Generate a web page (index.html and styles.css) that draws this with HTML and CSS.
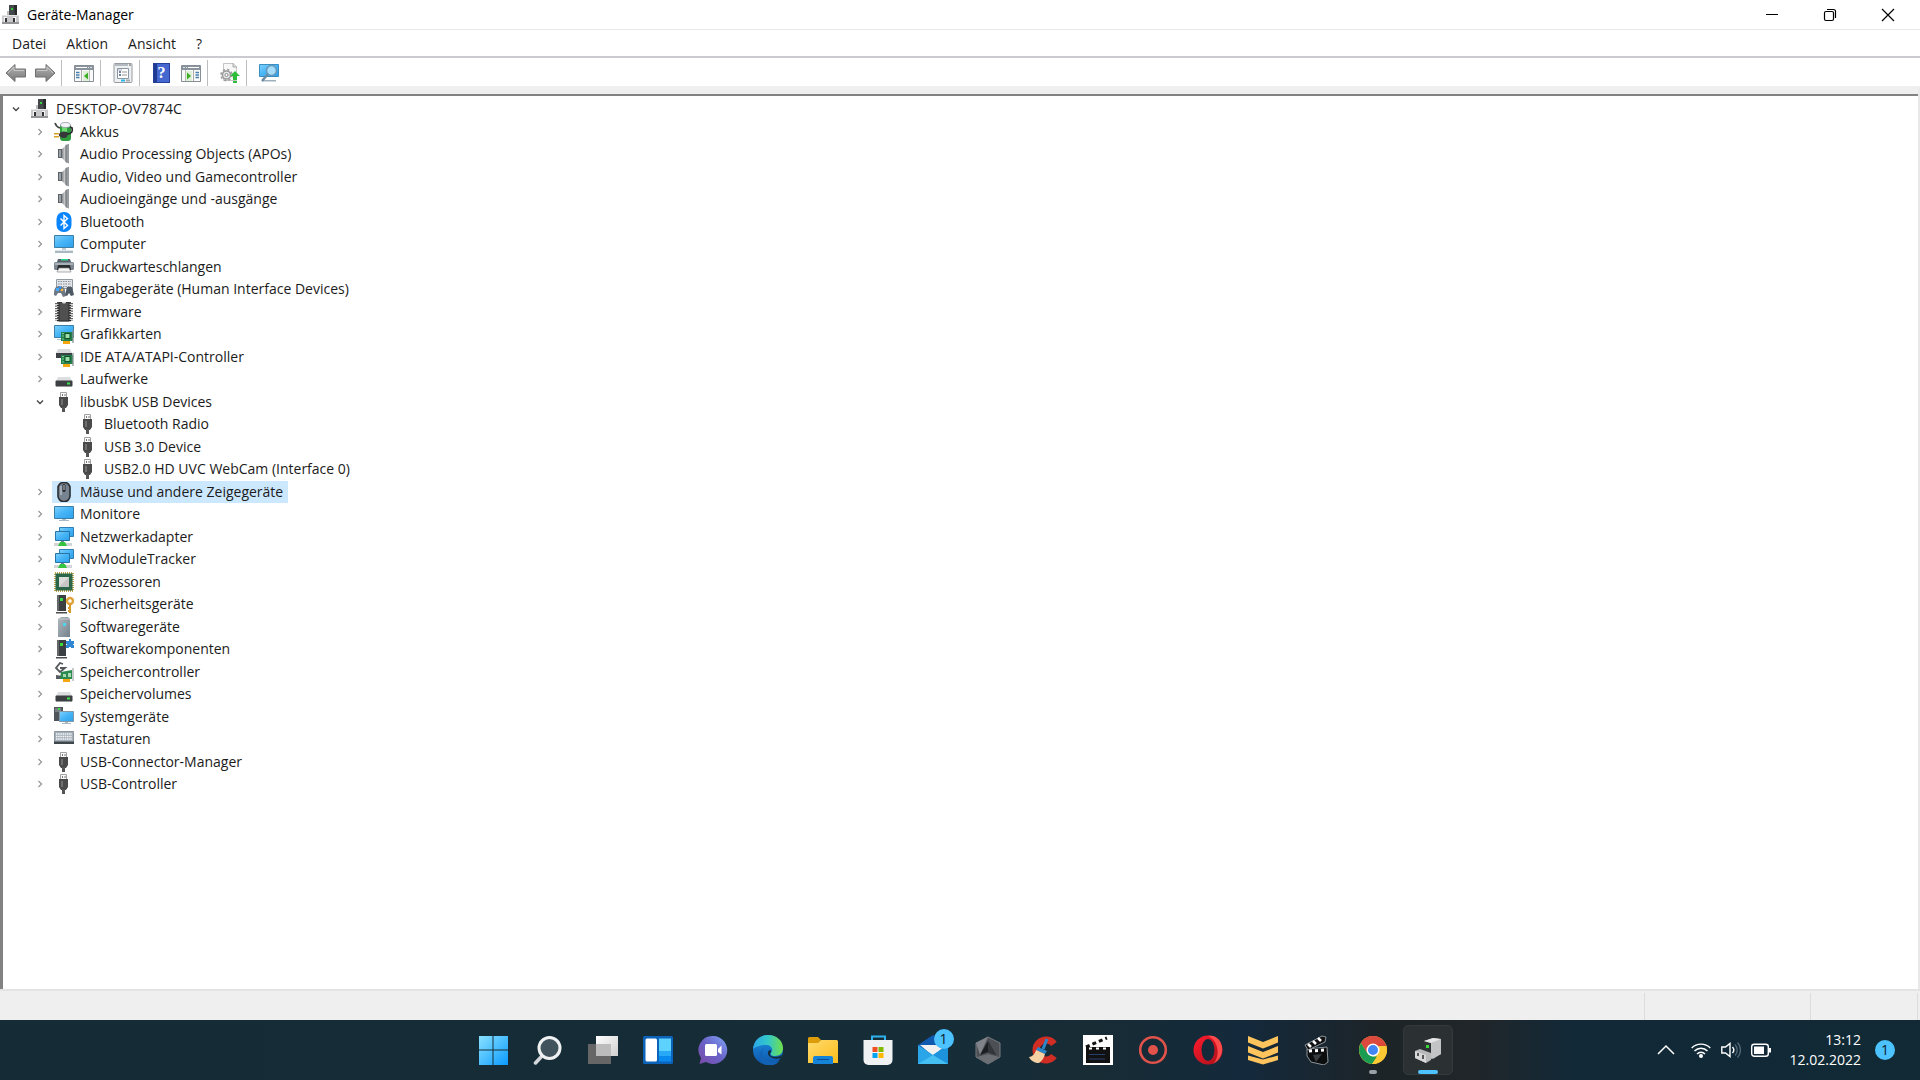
FILE: index.html
```html
<!DOCTYPE html>
<html lang="de">
<head>
<meta charset="utf-8">
<meta name="viewport" content="width=device-width, initial-scale=1">
<title>Geräte-Manager</title>
<link rel="stylesheet" href="styles.css">
</head>
<body>
<svg class="sprite" aria-hidden="true">
  <defs>
    <linearGradient id="g-screen" x1="0" y1="0" x2="1" y2="1"><stop offset="0" stop-color="#7fd0fb"/><stop offset=".5" stop-color="#45b4f7"/><stop offset="1" stop-color="#2f9fe8"/></linearGradient>
    <linearGradient id="g-metal" x1="0" y1="0" x2="1" y2="0"><stop offset="0" stop-color="#85898d"/><stop offset=".5" stop-color="#c4c6c8"/><stop offset="1" stop-color="#75797d"/></linearGradient>
    <linearGradient id="g-arrow" x1="0" y1="0" x2="0" y2="1"><stop offset="0" stop-color="#b5b5b5"/><stop offset="1" stop-color="#777"/></linearGradient>
    <linearGradient id="g-tower" x1="0" y1="0" x2="1" y2="1"><stop offset="0" stop-color="#b0b8be"/><stop offset="1" stop-color="#75828c"/></linearGradient>
    <linearGradient id="g-win" x1="0" y1="0" x2="1" y2="1"><stop offset="0" stop-color="#8ae1ff"/><stop offset="1" stop-color="#0a9bff"/></linearGradient>
    <linearGradient id="g-white" x1="0" y1="0" x2="1" y2="1"><stop offset="0" stop-color="#fff"/><stop offset="1" stop-color="#cfcfcf"/></linearGradient>
    <linearGradient id="g-chat" x1="1" y1="0" x2="0" y2="1"><stop offset="0" stop-color="#7fa5f5"/><stop offset=".5" stop-color="#6a62c8"/><stop offset="1" stop-color="#7a4aa8"/></linearGradient>
    <linearGradient id="g-edge1" x1="0" y1="0" x2="1" y2="0"><stop offset="0" stop-color="#2aa7ea"/><stop offset=".5" stop-color="#34c8c9"/><stop offset="1" stop-color="#6fe04a"/></linearGradient>
    <linearGradient id="g-edge2" x1="0" y1="0" x2="0" y2="1"><stop offset="0" stop-color="#1b8fdf"/><stop offset="1" stop-color="#0f57ad"/></linearGradient>
    <linearGradient id="g-folder" x1="0" y1="0" x2="1" y2="1"><stop offset="0" stop-color="#ffdb6e"/><stop offset="1" stop-color="#fdbc1a"/></linearGradient>
    <linearGradient id="g-opera" x1="0" y1="0" x2="1" y2="1"><stop offset="0" stop-color="#ff1b2d"/><stop offset="1" stop-color="#a8101a"/></linearGradient>

    <symbol id="i-devmgr" viewBox="0 0 20 20"><path d="M8 0h7v11H8z" fill="#45484b"/><path d="M13 0h3v11h-2z" fill="#27292b"/><path d="M10 3h2v2h-2z" fill="#2fd23c"/><path d="M6 6h2v5H6z" fill="#bcbec0"/><path d="M1 10h17v8H1z" fill="#c9c9cb"/><path d="M1 10h17v1H1z" fill="#e6e6e6"/><path d="M1 17h17v2H1z" fill="#929496"/><path d="M3 12h3v5H3zM12 12h3v5h-3z" fill="#f5f5f5"/><path d="M4 13h2v4H4zM12 13h2v4h-2z" fill="#333"/></symbol>
    <symbol id="i-battery" viewBox="0 0 20 20"><rect x="6" y="2" width="11" height="17" rx="3" fill="#2f9c3e"/><path d="M8 5h5v5H8z" fill="#6fdc74"/><ellipse cx="11.500" cy="3" rx="5" ry="2.500" fill="#f3f3f8" stroke="#8c8fa5" stroke-width=".8"/><path d="M1 1c1 3 2 4 5 5" stroke="#444" stroke-width="1.600" fill="none"/><path d="M5 12c2-3 5-3 8-2l1 2-1 3c-3 2-5 1-8-1z" fill="#36383a"/><path d="M13 12c5 0 6-3 5-6l-2-1" fill="none" stroke="#2c2e30" stroke-width="1.800"/><path d="M0 11h5v1.500H0zM0 14h5v1.500H0z" fill="#d6a326"/></symbol>
    <symbol id="i-speaker" viewBox="0 0 20 20"><path d="M4 5h4v9H4z" fill="#5c6166"/><path d="M5 6h2v7H5z" fill="#9aa1a7"/><path d="M8 5l5-4.500v18.500l-5-5z" fill="url(#g-metal)"/><path d="M11.500 1L15 0v19.500L11.500 18z" fill="#83878b"/><path d="M14 1v18" stroke="#aeb2b5"/></symbol>
    <symbol id="i-bluetooth" viewBox="0 0 20 20"><rect x="2.500" width="15" height="20" rx="7" fill="#0a84ff"/><path d="M6.500 6.500l7 7-3.500 3v-13l3.500 3-7 7" fill="none" stroke="#fff" stroke-width="1.400"/></symbol>
    <symbol id="i-computer" viewBox="0 0 20 20"><path d="M.5 1.500h19v12H.5z" fill="url(#g-screen)" stroke="#3b7fa8"/><path d="M8 14h4v2H8z" fill="#c5cdd3"/><path d="M1 17h18v2H1z" fill="#a9b9c2"/><path d="M1 16h18v1H1z" fill="#dfe6ea"/></symbol>
    <symbol id="i-printer" viewBox="0 0 20 20"><path d="M4 2h12l1 3H3z" fill="#57606a"/><path d="M7 2h7v1.500H7z" fill="#2fd38c"/><rect y="5" width="20" height="8" rx="1.500" fill="#7b858f"/><path d="M1 6h18v2H1z" fill="#a9b1b8"/><path d="M4 8h12l1 5H3z" fill="#2a2d30"/><path d="M5 11h10l2 4H3z" fill="#f4f4f4" stroke="#777" stroke-width=".6"/></symbol>
    <symbol id="i-hid" viewBox="0 0 20 20"><path d="M2.500.5h16v9h-16z" fill="#e2e5e9" stroke="#9199a1"/><path d="M4 2.500h13M4 5h13M4 7.500h13" stroke="#858d95" stroke-dasharray="1.500 1"/><path d="M2 8c2-1 3-1 4 0h2c2 0 3 2 3 4l1 5-3 1-2-4H4l-2 3-2-1c0-3 0-6 2-8z" fill="#6c7885"/><path d="M13 8h2c3-1 4 1 4 4l1 4-3 1-2-3-2 3-2-1z" fill="#4d5965"/><path d="M2 9h3v3H2z" fill="#44a9ff"/><circle cx="6" cy="8.500" r="1.300" fill="#2b8ef5"/><circle cx="8" cy="11" r="1.300" fill="#f5b83a"/></symbol>
    <symbol id="i-firmware" viewBox="0 0 20 20"><path d="M3 1h14M3 3.500h14M3 6h14M3 8.500h14M3 11h14M3 13.500h14M3 16h14M3 18.500h14" stroke="#1c1c1c" stroke-width="1.300"/><path d="M2 1v18M18 1v18" stroke="#333" stroke-width="1.500" stroke-dasharray="1.300 1.200"/><path d="M5 0h10v19H5z" fill="#505050" stroke="#2b2b2b"/><path d="M8 0h4c0 2-4 2-4 0z" fill="#ddd"/></symbol>
    <symbol id="i-board" viewBox="0 0 20 20"><path d="M9 17h7v3H9z" fill="#f5a50f"/><path d="M7 8h12v9H7z" fill="#25814b"/><path d="M19 6v13" stroke="#8d9598" stroke-width="1.300"/><path d="M11 9.500h5v5h-5z" fill="#9be0a9" stroke="#124d2b"/><path d="M8 9.500h2M8 12h2M8 15h2" stroke="#7dcc91"/></symbol>
    <symbol id="i-gpu" viewBox="0 0 20 20"><path d="M.5 1.500h19v12H.5z" fill="url(#g-screen)" stroke="#3b7fa8"/><path d="M3 15h6v1H3z" fill="#afc3cf"/><use href="#i-board"/></symbol>
    <symbol id="i-ide" viewBox="0 0 20 20"><path d="M4 2h12l2 4H2z" fill="#d7d9da"/><path d="M2 6h16v5H2z" fill="#3d4145"/><use href="#i-board"/></symbol>
    <symbol id="i-drive" viewBox="0 0 20 20"><path d="M4 8h12l2 4H2z" fill="#dcdedf"/><rect x="1.500" y="11.500" width="17" height="6" rx="1" fill="#3c4043"/><path d="M2 17.500h16" stroke="#95999c"/><path d="M13 13.500h3v2h-3z" fill="#3ae04c"/></symbol>
    <symbol id="i-usb" viewBox="0 0 20 20"><path d="M6.500.5h6v6h-6z" fill="#fafafa" stroke="#a2a2a2"/><path d="M8 2h1v2H8zM10.500 2h1v2h-1z" fill="#777"/><path d="M5 5h9v8l-2 3H7l-2-3z" fill="#4a4a4a"/><path d="M7 7h2v6H7z" fill="#707070"/><path d="M8 15h3v5H8z" fill="#555"/></symbol>
    <symbol id="i-mouse" viewBox="0 0 20 20"><rect x="4" y=".5" width="12" height="19" rx="5.500" fill="#778390" stroke="#292d31" stroke-width="1.600"/><path d="M7 4v9" stroke="#b1bac3" stroke-width="1.500"/><rect x="8.500" y="2" width="3" height="8" rx="1.500" fill="#24282c"/><path d="M10 3v5" stroke="#c8ced4"/></symbol>
    <symbol id="i-monitor" viewBox="0 0 20 20"><path d="M.5 2.500h19v12H.5z" fill="url(#g-screen)" stroke="#3b7fa8"/><path d="M8 15h4v1H8zM5 16h10v1H5z" fill="#a9bac6"/></symbol>
    <symbol id="i-network" viewBox="0 0 20 20"><path d="M5.500.5h14v9h-14z" fill="url(#g-screen)" stroke="#2f7fb5"/><path d="M1.500 4.500h14v9h-14z" fill="url(#g-screen)" stroke="#2673a6"/><path d="M7 14h3v1H7z" fill="#6e8798"/><path d="M0 16h18v3H0z" fill="#d2d5d7"/><path d="M6 15h5l2 4H4z" fill="#35c43f"/></symbol>
    <symbol id="i-cpu" viewBox="0 0 20 20"><path d="M1 1h18v18H1z" fill="none" stroke="#c0a447" stroke-width="2" stroke-dasharray="1 1"/><path d="M1.500 1.500h17v17h-17z" fill="#2b6648"/><path d="M5 5h10v10H5z" fill="#dcdcdc"/><path d="M5 15L15 5v10z" fill="#c6c6c6"/></symbol>
    <symbol id="i-tower" viewBox="0 0 20 20"><path d="M3 1h9v16H3z" fill="#3c3f41"/><path d="M3 1h2v16H3z" fill="#66696b"/><path d="M6 4h3v3H6z" fill="#39dc42"/><path d="M2 18h11v1.500H2z" fill="#4a4c4e"/></symbol>
    <symbol id="i-security" viewBox="0 0 20 20"><use href="#i-tower"/><circle cx="16" cy="7" r="3" fill="none" stroke="#dfa33a" stroke-width="2.400"/><path d="M16 10v9M14 14h2M14 17h2" stroke="#d99a2c" stroke-width="2"/></symbol>
    <symbol id="i-softdev" viewBox="0 0 20 20"><path d="M4 2l3-2h7l2 2v18H4z" fill="url(#g-tower)"/><path d="M4 2h12" stroke="#c6ccd0"/><path d="M9 6h3v3H9z" fill="#4cd6ee"/></symbol>
    <symbol id="i-softcomp" viewBox="0 0 20 20"><use href="#i-tower"/><path d="M12 2h3V0h2v2h3v3h-1v1h1v3h-3V8h-2v1h-3V6h1V5h-1z" fill="#2d87d3"/></symbol>
    <symbol id="i-memctl" viewBox="0 0 20 20"><path d="M9 2L6 1 2 6l4 4 5-4H6" fill="none" stroke="#55595b" stroke-width="1.800"/><path d="M2 13l7 1v3H2z" fill="#585c5f"/><path d="M9 17h7v3H9z" fill="#f5a50f"/><path d="M7 10l11-2v9H6z" fill="#2d8a50"/><path d="M9 12h3v3H9zM14 11h3v4h-3z" fill="#a7dcb2"/><path d="M19 6v13" stroke="#8d9598"/></symbol>
    <symbol id="i-system" viewBox="0 0 20 20"><path d="M0 0h9v14H0z" fill="#50565a"/><path d="M1 2h6M1 4h6" stroke="#a0a5a8"/><path d="M4 1h2v2H4z" fill="#38e048"/><path d="M5.500 4.500h14v10h-14z" fill="url(#g-screen)" stroke="#8298a7"/><path d="M11 15h3v1h-3zM8 16h9v1H8z" fill="#a9bac6"/></symbol>
    <symbol id="i-keyboard" viewBox="0 0 20 20"><path d="M.5 2.500h19v11H.5z" fill="#a5afb8" stroke="#8c969e"/><path d="M2 5h16M2 7.500h16M2 10h16" stroke="#f6f8fa" stroke-width="1.500" stroke-dasharray="1.500 .7"/><path d="M0 12.500h20V15H0z" fill="#3f464c"/></symbol>
    <symbol id="i-open" viewBox="0 0 16 16"><path d="M5 6.500l3 3 3-3" fill="none" stroke="#444" stroke-width="1.300"/></symbol>
    <symbol id="i-closed" viewBox="0 0 16 16"><path d="M6.500 5l3 3-3 3" fill="none" stroke="#999" stroke-width="1.300"/></symbol>
    <symbol id="i-arrow" viewBox="0 0 22 20"><path d="M1 10l9-8.500V6h10.500v8H10v4.500z" fill="url(#g-arrow)" stroke="#707070"/><path d="M3 10l6-6v3.500h10" fill="none" stroke="#c6c6c6"/></symbol>
    <symbol id="i-panel" viewBox="0 0 20 20"><path d="M.5 2.500h19v16H.5z" fill="#fafafa" stroke="#868e96"/><path d="M1 3h18v4H1z" fill="#8b949d"/><path d="M2 4.500h11" stroke="#fff"/><path d="M14 4.500h1M16 4.500h2" stroke="#d9e1e8"/><path d="M7.500 7v11" stroke="#aaa"/><path d="M2 9.500h3.500M2 12h3.500M2 14.500h3.500" stroke="#477fae" stroke-width="1.300"/><path d="M9 8h6v10H9z" fill="#dff0d9"/><path d="M15.500 7v11" stroke="#bbb"/><path d="M14 9.500v7l-4-3.500z" fill="#3cac24"/></symbol>
  </defs>
</svg>

<div class="desktop">
<main class="window">
  <header class="titlebar">
    <svg class="icon"><use href="#i-devmgr"/></svg>
    <h1>Geräte-Manager</h1>
    <div class="window-buttons">
      <button aria-label="Minimieren"><svg viewBox="0 0 14 14"><path d="M1 6.500h12" stroke="#000" fill="none"/></svg></button>
      <button aria-label="Verkleinern"><svg viewBox="0 0 14 14"><rect x="1.500" y="3.500" width="9" height="9" rx="1.500" fill="none" stroke="#000" stroke-width="1.200"/><path d="M4 1.500h6.500a2 2 0 0 1 2 2V10" fill="none" stroke="#000" stroke-width="1.200"/></svg></button>
      <button aria-label="Schließen"><svg viewBox="0 0 14 14"><path d="M1 1l12 12M13 1L1 13" stroke="#000" stroke-width="1.200"/></svg></button>
    </div>
  </header>
  <nav class="menubar">
    <button>Datei</button><button>Aktion</button><button>Ansicht</button><button>?</button>
  </nav>
  <div class="toolbar" role="toolbar">
    <button aria-label="Zurück"><svg class="arrow"><use href="#i-arrow"/></svg></button>
    <button aria-label="Vorwärts"><svg class="arrow flip"><use href="#i-arrow"/></svg></button>
    <span class="sep"></span>
    <button aria-label="Konsolenstruktur"><svg class="icon"><use href="#i-panel"/></svg></button>
    <span class="sep"></span>
    <button aria-label="Eigenschaften"><svg class="icon" viewBox="0 0 20 20"><rect x="1" y=".5" width="18" height="19" rx="1" fill="#eef0f1" stroke="#969ca2"/><path d="M2 2h13" stroke="#b3bac0" stroke-width="2"/><path d="M16 2h2" stroke="#555"/><path d="M4.500 5.500h11v10h-11z" fill="#fff" stroke="#8a98a6"/><path d="M5 7h4" stroke="#aab" /><path d="M6 9h2M6 12h2" stroke="#458" stroke-width="1.500"/><path d="M9 9h5M9 12h5" stroke="#999"/><path d="M8 17.500h4" stroke="#28b5e8" stroke-width="2"/><path d="M13 17.500h4" stroke="#aaa" stroke-width="2"/></svg></button>
    <span class="sep"></span>
    <button aria-label="Hilfe"><span class="help">?</span></button>
    <button aria-label="Aktionsbereich"><svg class="icon flip"><use href="#i-panel"/></svg></button>
    <span class="sep"></span>
    <button aria-label="Treiber aktualisieren"><svg class="icon" viewBox="0 0 20 20"><path d="M3.500.5h10l3 3v14h-13z" fill="#f8f8f8" stroke="#c5c5c5"/><path d="M13 0v4h4" fill="#ddd" stroke="#aaa"/><circle cx="6.500" cy="12" r="4" fill="#eee" stroke="#9b9b9b" stroke-width="1.600"/><circle cx="6.500" cy="12" r="5.500" fill="none" stroke="#9b9b9b" stroke-width="1.600" stroke-dasharray="2.200 2.120"/><circle cx="6.500" cy="12" r="1.600" fill="#fff" stroke="#888"/><path d="M15 8l5 5h-3v4h-4v-4h-3z" fill="#2ebd3a"/><path d="M13 18h4v2h-4z" fill="#2ebd3a"/></svg></button>
    <span class="sep"></span>
    <button aria-label="Nach geänderter Hardware suchen"><svg class="icon" viewBox="0 0 20 20"><path d="M.5 1.500h19v12H.5z" fill="url(#g-screen)" stroke="#3b8fc0"/><path d="M3 17h14v1.500H3z" fill="#9db1bd"/><path d="M9 11l-6 7" stroke="#6b8ba3" stroke-width="2.500"/><circle cx="12.500" cy="7.500" r="5" fill="#a5dcf9" stroke="#6697b8" stroke-width="1.500"/></svg></button>
  </div>
  <section class="workspace">
    <ul class="tree" role="tree" aria-label="Geräte">
      <li class="l0"><button class="toggle" aria-label="Reduzieren"><svg><use href="#i-open"/></svg></button><span class="node"><svg class="icon"><use href="#i-devmgr"/></svg>DESKTOP-OV7874C</span></li>
      <li><button class="toggle" aria-label="Erweitern"><svg><use href="#i-closed"/></svg></button><span class="node"><svg class="icon"><use href="#i-battery"/></svg>Akkus</span></li>
      <li><button class="toggle" aria-label="Erweitern"><svg><use href="#i-closed"/></svg></button><span class="node"><svg class="icon"><use href="#i-speaker"/></svg>Audio Processing Objects (APOs)</span></li>
      <li><button class="toggle" aria-label="Erweitern"><svg><use href="#i-closed"/></svg></button><span class="node"><svg class="icon"><use href="#i-speaker"/></svg>Audio, Video und Gamecontroller</span></li>
      <li><button class="toggle" aria-label="Erweitern"><svg><use href="#i-closed"/></svg></button><span class="node"><svg class="icon"><use href="#i-speaker"/></svg>Audioeingänge und -ausgänge</span></li>
      <li><button class="toggle" aria-label="Erweitern"><svg><use href="#i-closed"/></svg></button><span class="node"><svg class="icon"><use href="#i-bluetooth"/></svg>Bluetooth</span></li>
      <li><button class="toggle" aria-label="Erweitern"><svg><use href="#i-closed"/></svg></button><span class="node"><svg class="icon"><use href="#i-computer"/></svg>Computer</span></li>
      <li><button class="toggle" aria-label="Erweitern"><svg><use href="#i-closed"/></svg></button><span class="node"><svg class="icon"><use href="#i-printer"/></svg>Druckwarteschlangen</span></li>
      <li><button class="toggle" aria-label="Erweitern"><svg><use href="#i-closed"/></svg></button><span class="node"><svg class="icon"><use href="#i-hid"/></svg>Eingabegeräte (Human Interface Devices)</span></li>
      <li><button class="toggle" aria-label="Erweitern"><svg><use href="#i-closed"/></svg></button><span class="node"><svg class="icon"><use href="#i-firmware"/></svg>Firmware</span></li>
      <li><button class="toggle" aria-label="Erweitern"><svg><use href="#i-closed"/></svg></button><span class="node"><svg class="icon"><use href="#i-gpu"/></svg>Grafikkarten</span></li>
      <li><button class="toggle" aria-label="Erweitern"><svg><use href="#i-closed"/></svg></button><span class="node"><svg class="icon"><use href="#i-ide"/></svg>IDE ATA/ATAPI-Controller</span></li>
      <li><button class="toggle" aria-label="Erweitern"><svg><use href="#i-closed"/></svg></button><span class="node"><svg class="icon"><use href="#i-drive"/></svg>Laufwerke</span></li>
      <li><button class="toggle" aria-label="Reduzieren"><svg><use href="#i-open"/></svg></button><span class="node"><svg class="icon"><use href="#i-usb"/></svg>libusbK USB Devices</span></li>
      <li class="l2"><span class="node"><svg class="icon"><use href="#i-usb"/></svg>Bluetooth Radio</span></li>
      <li class="l2"><span class="node"><svg class="icon"><use href="#i-usb"/></svg>USB 3.0 Device</span></li>
      <li class="l2"><span class="node"><svg class="icon"><use href="#i-usb"/></svg>USB2.0 HD UVC WebCam (Interface 0)</span></li>
      <li><button class="toggle" aria-label="Erweitern"><svg><use href="#i-closed"/></svg></button><span class="node selected"><svg class="icon"><use href="#i-mouse"/></svg>Mäuse und andere Zeigegeräte</span></li>
      <li><button class="toggle" aria-label="Erweitern"><svg><use href="#i-closed"/></svg></button><span class="node"><svg class="icon"><use href="#i-monitor"/></svg>Monitore</span></li>
      <li><button class="toggle" aria-label="Erweitern"><svg><use href="#i-closed"/></svg></button><span class="node"><svg class="icon"><use href="#i-network"/></svg>Netzwerkadapter</span></li>
      <li><button class="toggle" aria-label="Erweitern"><svg><use href="#i-closed"/></svg></button><span class="node"><svg class="icon"><use href="#i-network"/></svg>NvModuleTracker</span></li>
      <li><button class="toggle" aria-label="Erweitern"><svg><use href="#i-closed"/></svg></button><span class="node"><svg class="icon"><use href="#i-cpu"/></svg>Prozessoren</span></li>
      <li><button class="toggle" aria-label="Erweitern"><svg><use href="#i-closed"/></svg></button><span class="node"><svg class="icon"><use href="#i-security"/></svg>Sicherheitsgeräte</span></li>
      <li><button class="toggle" aria-label="Erweitern"><svg><use href="#i-closed"/></svg></button><span class="node"><svg class="icon"><use href="#i-softdev"/></svg>Softwaregeräte</span></li>
      <li><button class="toggle" aria-label="Erweitern"><svg><use href="#i-closed"/></svg></button><span class="node"><svg class="icon"><use href="#i-softcomp"/></svg>Softwarekomponenten</span></li>
      <li><button class="toggle" aria-label="Erweitern"><svg><use href="#i-closed"/></svg></button><span class="node"><svg class="icon"><use href="#i-memctl"/></svg>Speichercontroller</span></li>
      <li><button class="toggle" aria-label="Erweitern"><svg><use href="#i-closed"/></svg></button><span class="node"><svg class="icon"><use href="#i-drive"/></svg>Speichervolumes</span></li>
      <li><button class="toggle" aria-label="Erweitern"><svg><use href="#i-closed"/></svg></button><span class="node"><svg class="icon"><use href="#i-system"/></svg>Systemgeräte</span></li>
      <li><button class="toggle" aria-label="Erweitern"><svg><use href="#i-closed"/></svg></button><span class="node"><svg class="icon"><use href="#i-keyboard"/></svg>Tastaturen</span></li>
      <li><button class="toggle" aria-label="Erweitern"><svg><use href="#i-closed"/></svg></button><span class="node"><svg class="icon"><use href="#i-usb"/></svg>USB-Connector-Manager</span></li>
      <li><button class="toggle" aria-label="Erweitern"><svg><use href="#i-closed"/></svg></button><span class="node"><svg class="icon"><use href="#i-usb"/></svg>USB-Controller</span></li>
    </ul>
  </section>
  <footer class="statusbar"><span></span><span class="cell-wide"></span><span class="cell-narrow"></span></footer>
</main>

<footer class="taskbar">
  <div class="apps">
    <button aria-label="Start"><svg viewBox="0 0 30 30"><path d="M1 1h13.500v13.500H1zM15.500 1H30v13.500H15.500zM1 15.500h13.500V30H1zM15.500 15.500H30V30H15.500z" fill="url(#g-win)"/></svg></button>
    <button aria-label="Suche"><svg viewBox="0 0 30 30"><path d="M9 21l-6.500 7" stroke="#d5d8da" stroke-width="3.500" stroke-linecap="round"/><circle cx="16.500" cy="13" r="10.500" fill="#41535d" stroke="#f0f1f2" stroke-width="3"/></svg></button>
    <button aria-label="Taskansicht"><svg viewBox="0 0 30 30"><path d="M0 9h23v20H0z" fill="#666"/><path d="M8 1h22v20H8z" fill="url(#g-white)"/><path d="M8 9h15v12H8z" fill="#bcbcbc"/></svg></button>
    <button aria-label="Widgets"><svg viewBox="0 0 30 30"><rect y="1" width="30" height="28" rx="1.500" fill="#0c63ba"/><rect x="2.500" y="3.500" width="11.500" height="23" rx="1.500" fill="#fff"/><path d="M16 3.500h12V16H16z" fill="#5ed2ff"/><path d="M16 16h12v5H16z" fill="#27a9f8"/><path d="M16 21h12v5.500H16z" fill="#0a8aef"/></svg></button>
    <button aria-label="Chat"><svg viewBox="0 0 30 30"><path d="M15 1a14 14 0 1 1-7 26l-6.500 2 1.500-6A14 14 0 0 1 15 1z" fill="url(#g-chat)"/><rect x="7" y="9" width="12" height="12" rx="1.500" fill="#fff"/><path d="M20 14l3.500-3.500v9L20 17z" fill="#fff"/></svg></button>
    <button aria-label="Microsoft Edge"><svg viewBox="0 0 30 30"><circle cx="15" cy="15" r="15" fill="url(#g-edge2)"/><path d="M0 14C1 5 7 0 15 0c9 0 15 6 15 13 0 5-3 8-8 8-3 0-5-1-4-3 3-4 0-8-5-8C7 10 3 12 0 14z" fill="url(#g-edge1)"/><path d="M12 13c-5 4-3 12 6 14 4 1 7 0 9-2-3 5-8 6-13 5C4 28 5 16 12 13z" fill="#1263b5"/><path d="M18 17c-2 2-1 5 4 5 3 0 5-1 7-2l-1 3c-7 2-14-1-13-6 1-2 3-3 3 0z" fill="#142d38"/></svg></button>
    <button aria-label="Explorer"><svg viewBox="0 0 30 30"><path d="M0 3.500A1.500 1.500 0 0 1 1.500 2H10l3 3-3 4H0z" fill="#dd9d0a"/><path d="M0 8h10l3-3h15.500A1.500 1.500 0 0 1 30 6.500V28H0z" fill="url(#g-folder)"/><path d="M5 29v-6a2 2 0 0 1 2-2h16a2 2 0 0 1 2 2v6z" fill="#1583d8"/><path d="M9 24.500h12" stroke="#0b4d91"/></svg></button>
    <button aria-label="Microsoft Store"><svg viewBox="0 0 30 30"><path d="M9 6V1.500h13V6" fill="none" stroke="#2fb3ee" stroke-width="2"/><path d="M.5 5h29v20a5 5 0 0 1-5 5h-19a5 5 0 0 1-5-5z" fill="#f0f1f3"/><path d="M9.500 12h5v5h-5z" fill="#f04f24"/><path d="M15.500 12h5v5h-5z" fill="#7eba00"/><path d="M9.500 18h5v5h-5z" fill="#00a3ef"/><path d="M15.500 18h5v5h-5z" fill="#ffb800"/></svg></button>
    <button aria-label="Mail" class="mail"><svg viewBox="0 0 30 30"><path d="M0 10L15 0l15 10v19H0z" fill="#0f5aae"/><path d="M2 10h26L15 21z" fill="#f0f0f0"/><path d="M0 10l15 10 15-10v19H0z" fill="#2aa6e8"/><path d="M0 29l15-9 15-10v19z" fill="#45bef2"/><path d="M15 20l15 9V10z" fill="#1d92dd"/></svg><span class="badge">1</span></button>
    <button aria-label="Armoury Crate"><svg viewBox="0 0 30 30"><path d="M15 2l12 6v14l-12 7-12-7V8z" fill="#4c5055" stroke="#777b80"/><path d="M15 2L3 8l4 12z" fill="#80848a"/><path d="M15 6L7 20l8-3 8 3z" fill="#1c1f22"/><path d="M15 6v11l8 3z" fill="#33363a"/><path d="M4 22l11-3 11 3-11 7z" fill="#6b6e73"/></svg></button>
    <button aria-label="CCleaner"><svg viewBox="0 0 30 30"><path d="M26 9a10 10 0 1 0 0 12" fill="none" stroke="#d02d24" stroke-width="7"/><path d="M19 4l-4 10" stroke="#2b86c9" stroke-width="3"/><path d="M10 12l9 4-2 3-9-4z" fill="#2b86c9"/><path d="M8 15l9 4c-1 4-3 7-6 9-4 0-8-2-10-6 3 0 6-3 7-7z" fill="#f5d1a4"/></svg></button>
    <button aria-label="Video Editor"><svg viewBox="0 0 30 30"><path d="M0 0h30v30H0z" fill="#fff"/><path d="M3 13h24v15H3z" fill="#111"/><path d="M3 12L24 3" stroke="#111" stroke-width="3" stroke-dasharray="4 3"/><path d="M3 14h24" stroke="#111" stroke-width="4"/><path d="M6 13.500h20" stroke="#fff" stroke-width="2" stroke-dasharray="3 4"/><path d="M6 19.500h16M6 24h16" stroke="#27416e"/></svg></button>
    <button aria-label="Aufnahme"><svg viewBox="0 0 30 30"><circle cx="15" cy="15" r="12.800" fill="none" stroke="#e0524a" stroke-width="2.600"/><circle cx="15" cy="15" r="5" fill="#e0524a"/></svg></button>
    <button aria-label="Opera"><svg viewBox="0 0 30 30"><circle cx="15" cy="15" r="14.500" fill="url(#g-opera)"/><path d="M15 1c14-3 21 19 5 28 6-5 8-22-5-28z" fill="#ff4b4b"/><ellipse cx="15" cy="15" rx="6.500" ry="11" fill="#142a3a"/></svg></button>
    <button aria-label="Buffer"><svg viewBox="0 0 30 30"><path d="M0 1l15 6 15-6v6.500l-15 6-15-6zM0 11l15 6 15-6v6.500l-15 6-15-6zM0 20.500l15 4 15-4V25l-15 4.500L0 25z" fill="#fdc35d"/></svg></button>
    <button aria-label="Filmklappe"><svg viewBox="0 0 30 30"><path d="M4 14l20-2 1 15-4 3-13-3-4-6z" fill="#0c0d0e" stroke="#8c959a"/><path d="M2 10L19 1l4 1-1 5L5 15z" fill="#111" stroke="#8c959a"/><path d="M5 9l3 3M10 6l3 3M15 3l3 3" stroke="#fff" stroke-width="2.500"/><path d="M6 16l17-1" stroke="#fff" stroke-width="3" stroke-dasharray="3 3"/><path d="M10 20l9-1-6 8" fill="#3a3d3f"/></svg></button>
    <button aria-label="Google Chrome" class="running"><svg viewBox="0 0 30 30"><circle cx="15" cy="15" r="14" fill="#fcc934"/><path d="M15 15H29A14 14 0 0 0 3 8z" fill="#db4437"/><path d="M15 8.500h12.400A14 14 0 0 0 3 8l6 10z" fill="#dc4a3d"/><path d="M3 8l6.400 10.300L15 21.500h5.500L14 29A14 14 0 0 1 3 8z" fill="#1a9c52"/><path d="M20.500 11h7.900a14 14 0 0 1-14.400 18l6.500-10z" fill="#fcc934"/><circle cx="15" cy="15" r="6.500" fill="#fff"/><circle cx="15" cy="15" r="5" fill="#4285f4"/></svg></button>
    <button aria-label="Geräte-Manager" class="running active"><svg viewBox="0 0 30 30"><path d="M11 6l9-3 8 1v15l-8 5-9-6z" fill="#b5b6b8"/><path d="M11 6l7 2v14l-7-5z" fill="#303336"/><path d="M18 8l10-4v15l-10 5z" fill="#c3c4c6"/><path d="M11 6l9-3 8 1-10 4z" fill="#e5e5e6"/><path d="M13 10h3v3h-3z" fill="#35da3a"/><path d="M2 16l5-2 11 4v7l-5 3-11-5z" fill="#b8b8ba"/><path d="M2 16l11 4v8L2 23z" fill="#d7d7d9"/><path d="M5 18v3M10 20v4" stroke="#555" stroke-width="2"/></svg></button>
  </div>
  <div class="tray">
    <button aria-label="Ausgeblendete Symbole"><svg viewBox="0 0 20 20"><path d="M2 14l8-8 8 8" fill="none" stroke="#fff" stroke-width="1.500"/></svg></button>
    <button class="status" aria-label="Netzwerk, Lautstärke, Akku">
      <svg viewBox="0 0 20 20"><path d="M.7 8a13 13 0 0 1 18.600 0M3.500 11a9 9 0 0 1 13 0M6 14a5.500 5.500 0 0 1 8 0" fill="none" stroke="#fff" stroke-width="1.400"/><circle cx="10" cy="16" r="2" fill="#fff"/></svg>
      <svg viewBox="0 0 20 20"><path d="M.8 7h3.700L9 3.500v13L4.500 13H.8z" fill="none" stroke="#fff" stroke-width="1.400"/><path d="M11.500 7a4.500 4.500 0 0 1 0 6" fill="none" stroke="#fff" stroke-width="1.400"/><path d="M14 4.500a8 8 0 0 1 0 11M16.500 2.500a11 11 0 0 1 0 15" fill="none" stroke="#526672" stroke-width="1.300"/></svg>
      <svg viewBox="0 0 20 20"><rect x=".7" y="4.200" width="16.600" height="12" rx="2.500" fill="none" stroke="#fff" stroke-width="1.400"/><path d="M3 6.500h10v7.500H3z" fill="#fff"/><path d="M18 8h2v4.500h-2z" fill="#fff"/></svg>
    </button>
    <button class="clock"><time>13:12</time><time>12.02.2022</time></button>
    <span class="badge">1</span>
  </div>
</footer>
</div>
</body>
</html>
```

FILE: styles.css
```css
* { box-sizing: border-box; }

body {
  margin: 0;
  background: #fff;
  color: #1b1b1b;
  font: 14px/20px "Open Sans", "Noto Sans", sans-serif;
}

button {
  border: 0;
  padding: 0;
  background: none;
  color: inherit;
  font: inherit;
}

svg { display: block; }
.sprite { position: absolute; width: 0; height: 0; }
.icon { width: 20px; height: 20px; flex: none; }
.flip { transform: scaleX(-1); }

.desktop { display: flex; flex-direction: column; min-height: 100vh; }
.window { flex: 1; display: flex; flex-direction: column; }

/* Title and menu */
.titlebar {
  display: flex;
  align-items: center;
  gap: 6px;
  height: 30px;
  padding: 0 3px 0 1px;
  border-bottom: 1px solid #e8e8e8;
}
.titlebar h1 { margin: 0; font-size: 14px; font-weight: 400; color: #000; }
.window-buttons { display: flex; margin-left: auto; }
.window-buttons button { display: grid; place-items: center; width: 58px; height: 28px; }
.window-buttons svg { width: 14px; height: 14px; }
.menubar {
  display: flex;
  gap: 20px;
  height: 28px;
  padding: 2px 12px 0;
  border-bottom: 2px solid #cbcbcf;
}

/* Toolbar */
.toolbar { display: flex; align-items: center; height: 28px; padding: 1px 0 0 1px; }
.toolbar button { display: grid; place-items: center; width: 29px; height: 27px; }
.arrow { width: 22px; height: 20px; }
.sep { width: 1px; height: 26px; margin: 0 7px 0 2px; background: #bdbdbd; }
.help {
  width: 17px;
  height: 20px;
  border: 1px solid #24409a;
  background: linear-gradient(90deg, #1f3a93 3px, #4468d0 3px);
  color: #fff;
  font: 700 16px/18px "Liberation Serif", serif;
}

/* Device tree */
.workspace {
  flex: 1;
  display: flex;
  border-top: 8px solid #efefef;
  border-right: 2px solid #e8e8e8;
}
.tree {
  flex: 1;
  margin: 0;
  padding: 2px 0 0;
  list-style: none;
  border-top: 2px solid #828282;
  border-left: 3px solid #828282;
}
.tree li { display: flex; align-items: center; height: 22px; padding-left: 29px; }
.tree li:nth-child(even) { height: 23px; }
.tree .l0 { padding-left: 5px; }
.tree .l2 { padding-left: 73px; }
.toggle { width: 16px; height: 16px; margin-right: 4px; }
.toggle svg { width: 16px; height: 16px; }
.node { display: flex; align-items: center; gap: 6px; height: 22px; padding: 0 5px 0 2px; white-space: nowrap; }
.selected { background: #cce8ff; }

.statusbar {
  display: flex;
  height: 31px;
  padding: 2px 2px 0 0;
  border-top: 2px solid #e3e3e3;
  background: #efefef;
}
.statusbar span { flex: 1; border-right: 1px solid #dcdcdc; }
.statusbar .cell-wide { flex: 0 0 166px; }
.statusbar .cell-narrow { flex: 0 0 107px; }

/* Taskbar */
.taskbar {
  display: grid;
  grid-template-columns: 1fr auto 1fr;
  align-items: center;
  height: 60px;
  background: linear-gradient(90deg, #152c37 0, #162d38 45%, #172c35 57%, #14293b 65%, #1d2428 72%, #20262a 77%, #122938 82%, #112a35 100%);
  color: #fff;
}
.apps { display: flex; grid-column: 2; gap: 5px; }
.apps button {
  position: relative;
  display: grid;
  place-items: center;
  width: 50px;
  height: 50px;
  border-radius: 5px;
}
.apps svg { width: 30px; height: 30px; }
.badge {
  display: grid;
  place-items: center;
  width: 20px;
  height: 20px;
  border-radius: 50%;
  background: #4cc2ff;
  color: #10212b;
  font-size: 14px;
}
.mail .badge { position: absolute; top: 4px; right: 4px; }
.running::after {
  content: "";
  position: absolute;
  bottom: 1px;
  left: 50%;
  width: 8px;
  height: 4px;
  margin-left: -4px;
  border-radius: 2px;
  background: #9aa0a4;
}
.apps .active { background: #2b3033; border: 1px solid #34393b; }
.active::after { width: 20px; margin-left: -10px; bottom: 0; background: #4cc2ff; }
.tray { display: flex; align-items: center; justify-content: flex-end; padding-right: 25px; }
.tray svg { width: 20px; height: 20px; }
.status { display: flex; gap: 10px; margin: 0 19px 0 15px; }
.clock { display: grid; justify-items: end; margin-right: 14px; }
```
